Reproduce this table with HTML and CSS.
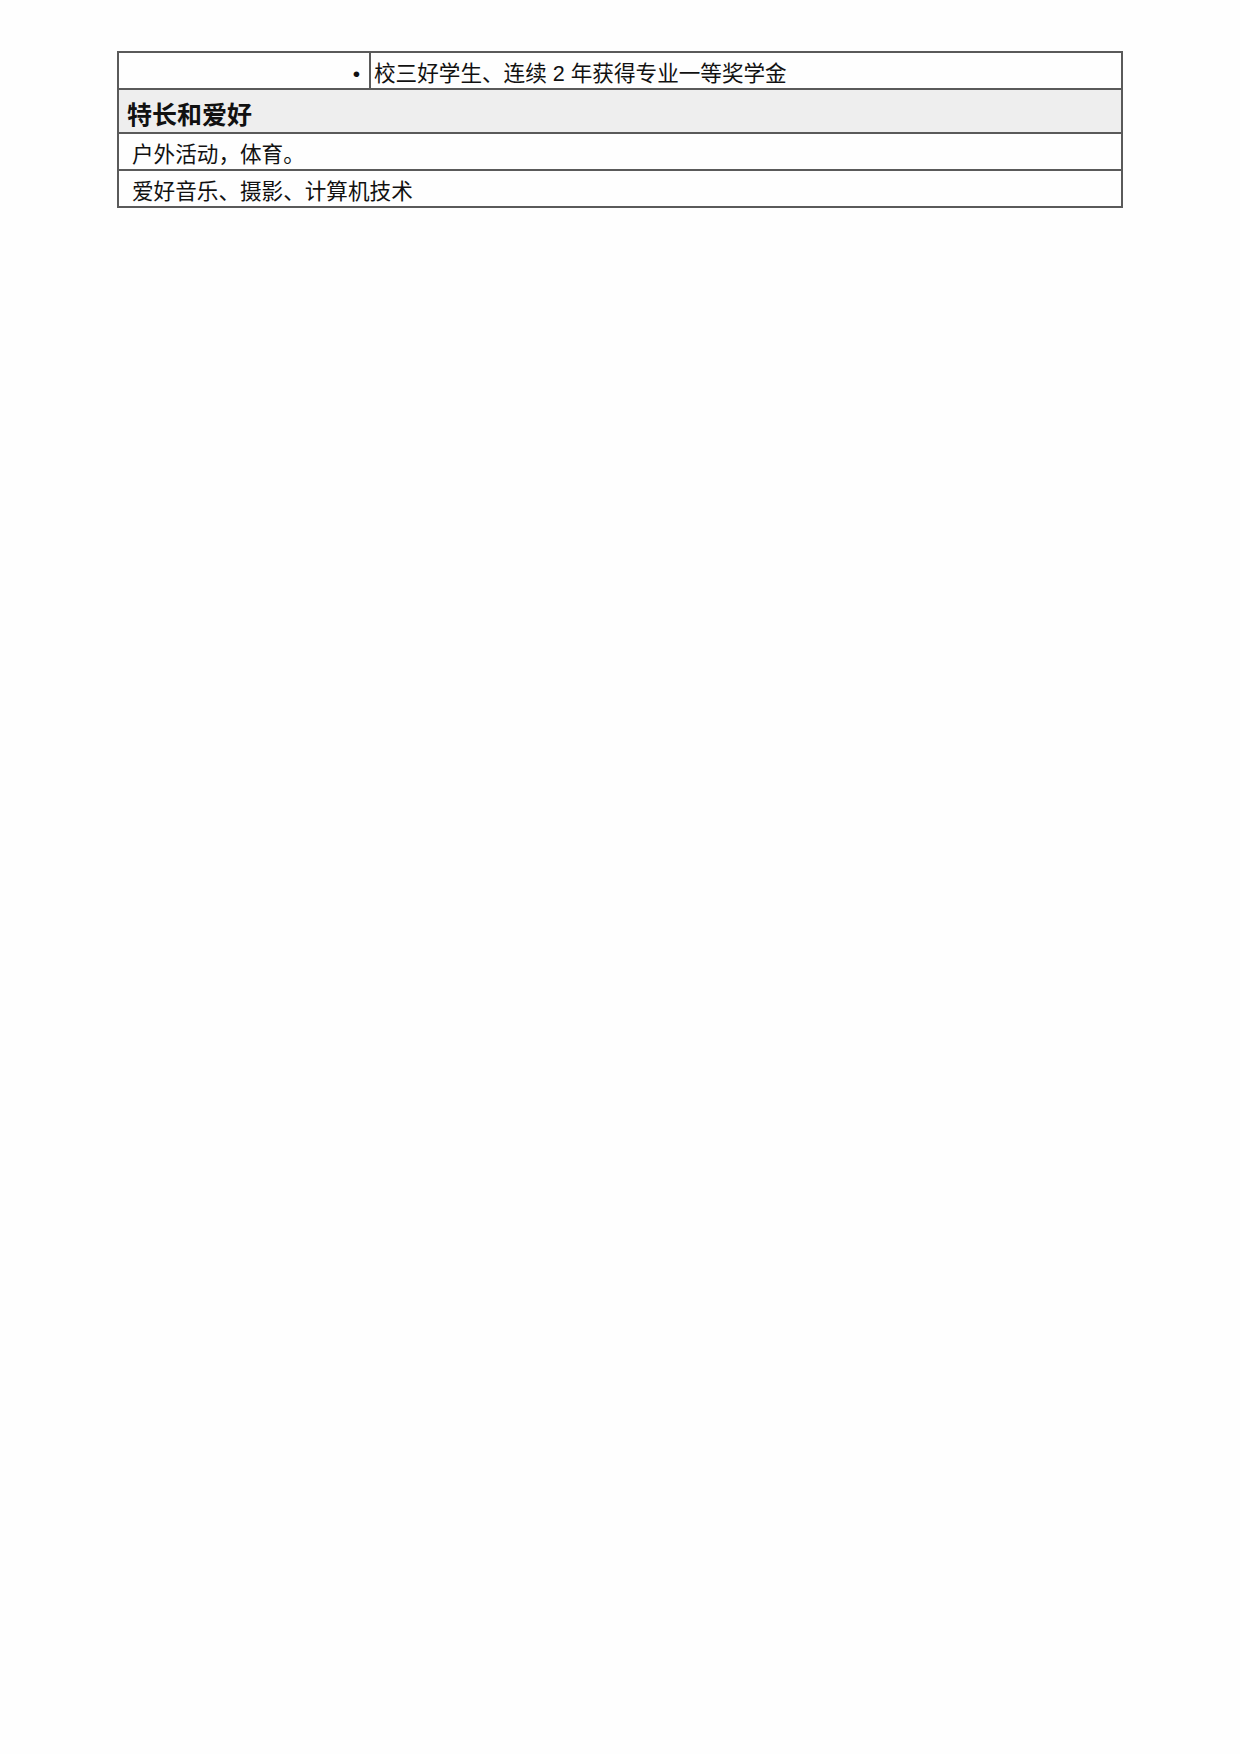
FILE: index.html
```html
<!DOCTYPE html>
<html lang="zh">
<head>
<meta charset="utf-8">
<link rel="stylesheet" href="styles.css">
</head>
<body>
<div class="page">
  <table class="resume">
    <colgroup>
      <col class="col-left">
      <col class="col-right">
    </colgroup>
    <tr class="row-award">
      <td class="cell-bullet"><span class="bullet">•</span></td>
      <td class="cell-award">校三好学生、连续 2 年获得专业一等奖学金</td>
    </tr>
    <tr class="row-head">
      <th colspan="2" class="cell-head">特长和爱好</th>
    </tr>
    <tr class="row-text">
      <td colspan="2" class="cell-text">户外活动，体育。</td>
    </tr>
    <tr class="row-text">
      <td colspan="2" class="cell-text">爱好音乐、摄影、计算机技术</td>
    </tr>
  </table>
</div>
</body>
</html>
```

FILE: styles.css
```css
html, body {
  margin: 0;
  padding: 0;
  background: #fefefe;
}

.page {
  padding: 51px 0 0 117px;
  font-family: "Liberation Sans", "Noto Sans CJK SC", sans-serif;
  color: #111;
}

.resume {
  border-collapse: collapse;
  width: 1006px;
  table-layout: fixed;
}

.col-left {
  width: 252px;
}

.resume td,
.resume th {
  border: 2px solid #5a5a5a;
  font-size: 21.6px;
  line-height: 1.2;
  vertical-align: middle;
  text-align: left;
}

.row-award {
  height: 37px;
}

.resume .cell-bullet {
  text-align: right;
  padding: 6px 9px 0 0;
}

.bullet {
  font-size: 21px;
}

.resume .cell-award {
  padding: 6px 4px 0 3px;
}

.row-head {
  height: 44px;
}

.resume .cell-head {
  background: #eeeeee;
  font-size: 25px;
  font-weight: bold;
  padding: 8px 8px 0 8px;
}

.row-text {
  height: 37px;
}

.resume .cell-text {
  padding: 6px 12px 0 13px;
}
```
